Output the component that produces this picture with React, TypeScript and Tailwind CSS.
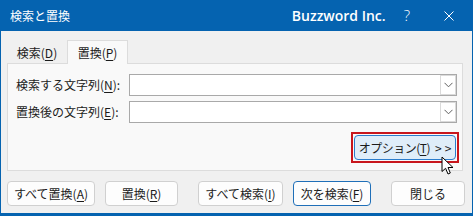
import React from "react";

const jp = "font-['Noto_Sans_CJK_JP','Noto_Sans',sans-serif]";

function U({ children }: { children: React.ReactNode }) {
  return <span className="underline underline-offset-[2px]">{children}</span>;
}

function Combo() {
  return (
    <div className="flex h-[22px] w-[328px] items-center justify-end border border-[#a9a9a9] bg-white">
      <div className="flex h-[20px] w-[16px] items-center justify-center border border-[#dadada] bg-white">
        <svg width="9" height="6" viewBox="0 0 9 6">
          <path d="M0.5 0.8 L4.5 4.8 L8.5 0.8" fill="none" stroke="#606060" strokeWidth="1" />
        </svg>
      </div>
    </div>
  );
}

function Btn({ w, children, primary }: { w: string; children: React.ReactNode; primary?: boolean }) {
  return (
    <div
      className={`flex h-[25px] ${w} items-center justify-center rounded-[4px] border bg-[#fdfdfd] text-[12px] leading-none text-[#1b1b1b] ${
        primary ? "border-[#1f6fb8]" : "border-[#d0d0d0]"
      }`}
    >
      {children}
    </div>
  );
}

export default function App() {
  return (
    <div className={`relative flex h-[216px] w-[473px] flex-col bg-[#0563b0] ${jp}`}>
      {/* Title bar */}
      <div className="flex h-[31px] items-center text-white">
        <span className="ml-[10px] text-[12px] leading-none">検索と置換</span>
        <span className="ml-auto font-['Open_Sans',sans-serif] text-[14px] font-semibold leading-none">
          Buzzword Inc.
        </span>
        <span className="ml-[18px] font-['Open_Sans',sans-serif] text-[15px] font-light leading-none">?</span>
        <svg className="ml-[34px] mr-[19px]" width="10" height="10" viewBox="0 0 10 10">
          <path d="M0.5 0.5 L9.5 9.5 M9.5 0.5 L0.5 9.5" stroke="white" strokeWidth="1" />
        </svg>
      </div>

      {/* Client area */}
      <div className="mx-[1px] mb-[3px] flex flex-1 flex-col bg-[#f0f0f0] px-[6px]">
        {/* Tabs */}
        <div className="mt-[9px] flex h-[23px] items-end">
          <div className="flex h-[21px] w-[60px] items-center justify-center text-[12px] leading-none text-[#1b1b1b]">
            検索(<U>D</U>)
          </div>
          <div className="relative z-10 -mb-px flex h-[24px] w-[61px] items-center justify-center border-x border-t border-[#dcdcdc] bg-[#f9f9f9] text-[12px] leading-none text-[#1b1b1b]">
            置換(<U>P</U>)
          </div>
        </div>

        {/* Panel */}
        <div className="flex h-[108px] w-[456px] flex-col border border-[#dcdcdc] bg-[#f9f9f9] pt-[10px]">
          <div className="flex h-[22px] items-center">
            <span className="ml-[8px] w-[113px] text-[12px] leading-none text-[#1b1b1b]">
              検索する文字列(<U>N</U>):
            </span>
            <Combo />
          </div>
          <div className="mt-[5px] flex h-[22px] items-center">
            <span className="ml-[8px] w-[113px] text-[12px] leading-none text-[#1b1b1b]">
              置換後の文字列(<U>E</U>):
            </span>
            <Combo />
          </div>
          <div className="mt-[9px] flex justify-end pr-[3px]">
            <div className="border-2 border-[#c8161d] p-px">
              <div className="flex h-[25px] w-[102px] items-center justify-center rounded-[4px] border border-[#2a7ccc] bg-[#dfedf9] text-[12px] leading-none text-[#1b1b1b]">
                <span className="tracking-[-0.5px]">
                  オプション(<U>T</U>)
                </span>
                <span className="ml-[5px]">&gt;</span>
                <span className="ml-[3px]">&gt;</span>
              </div>
            </div>
          </div>
        </div>

        {/* Bottom buttons */}
        <div className="mt-[10px] flex">
          <Btn w="w-[88px]">
            すべて置換(<U>A</U>)
          </Btn>
          <div className="ml-[10px]">
            <Btn w="w-[73px]">
              置換(<U>R</U>)
            </Btn>
          </div>
          <div className="ml-[20px]">
            <Btn w="w-[85px]">
              すべて検索(<U>I</U>)
            </Btn>
          </div>
          <div className="ml-[10px]">
            <Btn w="w-[78px]" primary>
              次を検索(<U>F</U>)
            </Btn>
          </div>
          <div className="ml-[20px]">
            <Btn w="w-[74px]">閉じる</Btn>
          </div>
        </div>
      </div>

      {/* Mouse cursor */}
      <svg className="absolute left-[441px] top-[156px]" width="14" height="20" viewBox="0 0 14 20">
        <path
          d="M1 1 L1 15.5 L4.6 12.3 L7 18 L9.3 17 L7 11.5 L12 11.5 Z"
          fill="white"
          stroke="black"
          strokeWidth="1"
          strokeLinejoin="round"
        />
      </svg>
    </div>
  );
}
